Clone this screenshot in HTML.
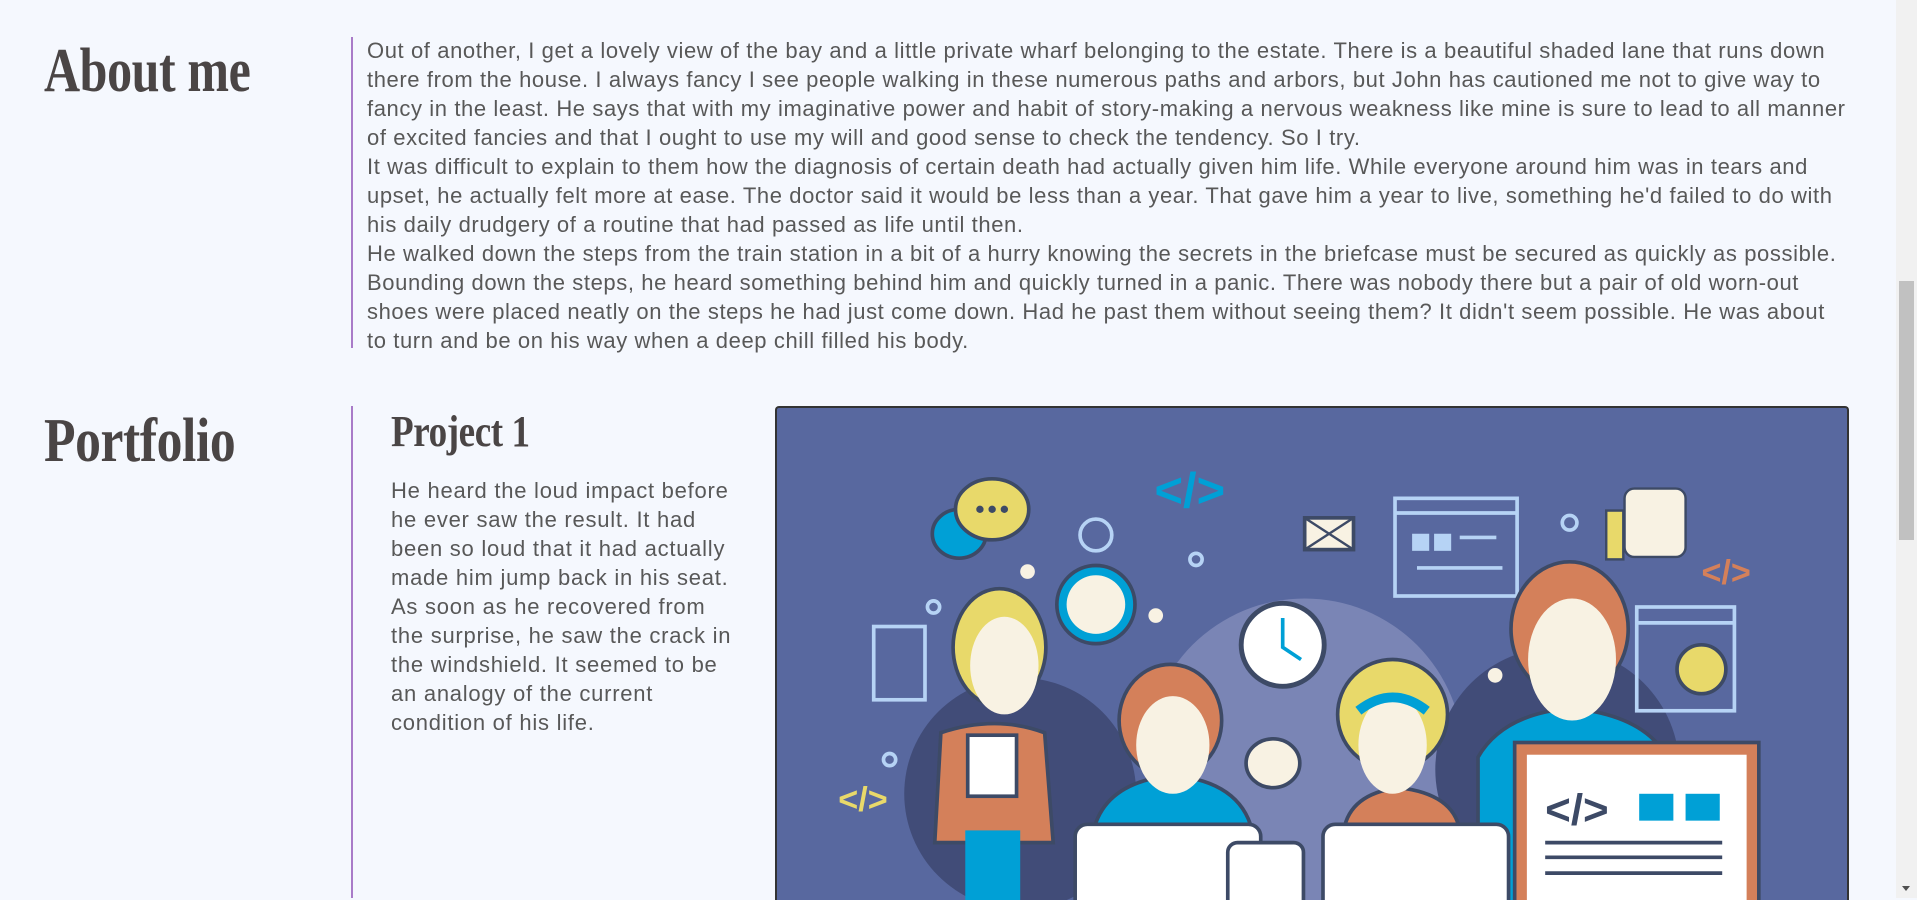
<!DOCTYPE html>
<html><head><meta charset="utf-8">
<style>
html,body{margin:0;padding:0;}
body{width:1917px;height:898px;overflow:hidden;background:#f5f8fe;position:relative;font-family:"Liberation Sans",sans-serif;}
.h{position:absolute;left:44px;font-family:"Liberation Serif",serif;font-weight:bold;color:#4a4545;font-size:62px;transform:scaleX(0.806);transform-origin:left top;white-space:nowrap;letter-spacing:-0.5px;}
.vl{position:absolute;left:351px;width:2px;background:#a97bc8;}
.p{position:absolute;left:367px;color:#585858;font-size:22px;line-height:29px;white-space:nowrap;letter-spacing:0.6px;}
.p2{position:absolute;left:391px;color:#585858;font-size:22px;line-height:29px;white-space:nowrap;letter-spacing:0.75px;}
.frame{position:absolute;left:775px;top:406px;width:1070px;height:492px;border:2px solid #333;border-bottom:none;border-radius:4px 4px 0 0;background:#58689f;overflow:hidden;}
.sb{position:absolute;left:1896px;top:0;width:21px;height:898px;background:#f1f1f1;}
.th{position:absolute;left:1899px;top:281px;width:15px;height:259px;background:#c1c1c1;}
</style></head><body>
<div class="h" style="top:36px;">About me</div>
<div class="vl" style="top:37px;height:311px;"></div>
<div class="p" style="top:36px;">Out of another, I get a lovely view of the bay and a little private wharf belonging to the estate. There is a beautiful shaded lane that runs down<br>there from the house. I always fancy I see people walking in these numerous paths and arbors, but John has cautioned me not to give way to<br>fancy in the least. He says that with my imaginative power and habit of story-making a nervous weakness like mine is sure to lead to all manner<br>of excited fancies and that I ought to use my will and good sense to check the tendency. So I try.<br>It was difficult to explain to them how the diagnosis of certain death had actually given him life. While everyone around him was in tears and<br>upset, he actually felt more at ease. The doctor said it would be less than a year. That gave him a year to live, something he'd failed to do with<br>his daily drudgery of a routine that had passed as life until then.<br>He walked down the steps from the train station in a bit of a hurry knowing the secrets in the briefcase must be secured as quickly as possible.<br>Bounding down the steps, he heard something behind him and quickly turned in a panic. There was nobody there but a pair of old worn-out<br>shoes were placed neatly on the steps he had just come down. Had he past them without seeing them? It didn't seem possible. He was about<br>to turn and be on his way when a deep chill filled his body.</div>

<div class="h" style="top:406px;transform:scaleX(0.833);">Portfolio</div>
<div class="vl" style="top:406px;height:492px;"></div>
<div class="h" style="top:406px;left:391px;font-size:44px;transform:scaleX(0.843);">Project 1</div>
<div class="p2" style="top:476px;">He heard the loud impact before<br>he ever saw the result. It had<br>been so loud that it had actually<br>made him jump back in his seat.<br>As soon as he recovered from<br>the surprise, he saw the crack in<br>the windshield. It seemed to be<br>an analogy of the current<br>condition of his life.</div>

<div class="frame">
<svg width="1070" height="492" viewBox="636 334 876 403" style="display:block">
<circle cx="1068" cy="620" r="130" fill="#7a85b5"/>
<circle cx="835" cy="650" r="95" fill="#414c78"/>
<circle cx="1275" cy="630" r="100" fill="#414c78"/>
<rect x="1142" y="408" width="100" height="80" fill="none" stroke="#b6d3f5" stroke-width="3"/>
<line x1="1142" y1="420" x2="1242" y2="420" stroke="#b6d3f5" stroke-width="3"/>
<rect x="1156" y="437" width="14" height="14" fill="#b6d3f5"/><rect x="1174" y="437" width="14" height="14" fill="#b6d3f5"/>
<line x1="1195" y1="440" x2="1225" y2="440" stroke="#b6d3f5" stroke-width="3"/><line x1="1160" y1="465" x2="1230" y2="465" stroke="#b6d3f5" stroke-width="3"/>
<rect x="1340" y="497" width="80" height="85" fill="none" stroke="#b6d3f5" stroke-width="3"/>
<line x1="1340" y1="510" x2="1420" y2="510" stroke="#b6d3f5" stroke-width="3"/>
<circle cx="1393" cy="548" r="20" fill="#e8d96a" stroke="#3d4a66" stroke-width="3"/>
<rect x="715" y="513" width="42" height="60" fill="none" stroke="#b6d3f5" stroke-width="3"/>
<ellipse cx="785" cy="437" rx="22" ry="20" fill="#00a0d6" stroke="#3d4a66" stroke-width="3"/>
<ellipse cx="812" cy="417" rx="30" ry="25" fill="#e8d96a" stroke="#3d4a66" stroke-width="3"/>
<circle cx="802" cy="417" r="3" fill="#3d4a66"/><circle cx="812" cy="417" r="3" fill="#3d4a66"/><circle cx="822" cy="417" r="3" fill="#3d4a66"/>
<ellipse cx="1042" cy="625" rx="22" ry="20" fill="#f8f2e3" stroke="#3d4a66" stroke-width="3"/>
<text x="945" y="415" font-family="Liberation Sans" font-size="40" font-weight="bold" fill="#00a0d6">&lt;/&gt;</text>
<text x="1393" y="478" font-family="Liberation Sans" font-size="28" font-weight="bold" fill="#d4805a">&lt;/&gt;</text>
<text x="686" y="664" font-family="Liberation Sans" font-size="28" font-weight="bold" fill="#e8d96a">&lt;/&gt;</text>
<rect x="1068" y="424" width="40" height="26" fill="#f8f2e3" stroke="#3d4a66" stroke-width="3"/>
<path d="M1068 424 L1108 450 M1108 424 L1068 450" stroke="#3d4a66" stroke-width="2"/>
<rect x="1315" y="418" width="14" height="40" fill="#e8d96a" stroke="#3d4a66" stroke-width="2"/>
<rect x="1330" y="400" width="50" height="56" rx="8" fill="#f8f2e3" stroke="#3d4a66" stroke-width="2"/>
<circle cx="897" cy="495" r="32" fill="#00a0d6" stroke="#3d4a66" stroke-width="3"/>
<circle cx="897" cy="495" r="24" fill="#f8f2e3"/>
<circle cx="897" cy="438" r="13" fill="none" stroke="#b6d3f5" stroke-width="3"/>
<circle cx="1050" cy="528" r="34" fill="#fff" stroke="#3d4a66" stroke-width="4"/>
<path d="M1050 506 V530 L1065 540" stroke="#00a0d6" stroke-width="3" fill="none"/>
<path d="M770 600 Q815 585 855 600 L862 690 L765 690Z" fill="#d4805a" stroke="#3d4a66" stroke-width="3"/>
<ellipse cx="818" cy="530" rx="38" ry="48" fill="#e8d96a" stroke="#3d4a66" stroke-width="3"/>
<ellipse cx="822" cy="545" rx="28" ry="40" fill="#f8f2e3"/>
<rect x="792" y="602" width="40" height="50" fill="#fff" stroke="#3d4a66" stroke-width="3"/>
<rect x="790" y="680" width="45" height="60" fill="#00a0d6"/>
<path d="M895 680 Q905 640 960 635 Q1015 640 1025 680Z" fill="#00a0d6" stroke="#3d4a66" stroke-width="3"/>
<ellipse cx="958" cy="590" rx="42" ry="46" fill="#d4805a" stroke="#3d4a66" stroke-width="3"/>
<ellipse cx="960" cy="610" rx="30" ry="40" fill="#f8f2e3"/>
<path d="M1100 680 Q1105 650 1145 645 Q1190 650 1195 680Z" fill="#d4805a" stroke="#3d4a66" stroke-width="3"/>
<circle cx="1140" cy="585" r="45" fill="#e8d96a" stroke="#3d4a66" stroke-width="3"/>
<ellipse cx="1140" cy="610" rx="28" ry="40" fill="#f8f2e3"/>
<path d="M1112 582 Q1140 560 1168 582" stroke="#00a0d6" stroke-width="8" fill="none"/>
<path d="M1210 620 Q1230 585 1285 580 Q1345 585 1365 620 L1365 760 L1210 760Z" fill="#00a0d6" stroke="#3d4a66" stroke-width="3"/>
<ellipse cx="1285" cy="515" rx="48" ry="55" fill="#d4805a" stroke="#3d4a66" stroke-width="3"/>
<ellipse cx="1287" cy="540" rx="36" ry="50" fill="#f8f2e3"/>
<rect x="880" y="675" width="152" height="90" rx="10" fill="#fff" stroke="#3d4a66" stroke-width="3"/>
<rect x="1083" y="675" width="152" height="90" rx="10" fill="#fff" stroke="#3d4a66" stroke-width="3"/>
<rect x="1005" y="690" width="62" height="70" rx="8" fill="#fff" stroke="#3d4a66" stroke-width="3"/>
<rect x="1240" y="608" width="200" height="160" fill="#d4805a" stroke="#3d4a66" stroke-width="3"/>
<rect x="1250" y="618" width="180" height="150" fill="#fff"/>
<text x="1265" y="675" font-family="Liberation Sans" font-size="36" font-weight="bold" fill="#3d4a66">&lt;/&gt;</text>
<rect x="1342" y="650" width="28" height="22" fill="#00a0d6"/><rect x="1380" y="650" width="28" height="22" fill="#00a0d6"/>
<g stroke="#3d4a66" stroke-width="3"><line x1="1265" y1="690" x2="1410" y2="690"/><line x1="1265" y1="702" x2="1410" y2="702"/><line x1="1265" y1="715" x2="1410" y2="715"/></g>
<g fill="#f8f2e3"><circle cx="841" cy="468" r="6"/><circle cx="946" cy="504" r="6"/><circle cx="1224" cy="553" r="6"/></g>
<g fill="none" stroke="#b6d3f5" stroke-width="3"><circle cx="764" cy="497" r="5"/><circle cx="979" cy="458" r="5"/><circle cx="1285" cy="428" r="6"/><circle cx="728" cy="622" r="5"/></g>
</svg>
</div>
<div class="sb"></div><div class="th"></div>
<div style="position:absolute;left:1902px;top:886px;width:0;height:0;border-left:4px solid transparent;border-right:4px solid transparent;border-top:5px solid #505050;"></div>
</body></html>
